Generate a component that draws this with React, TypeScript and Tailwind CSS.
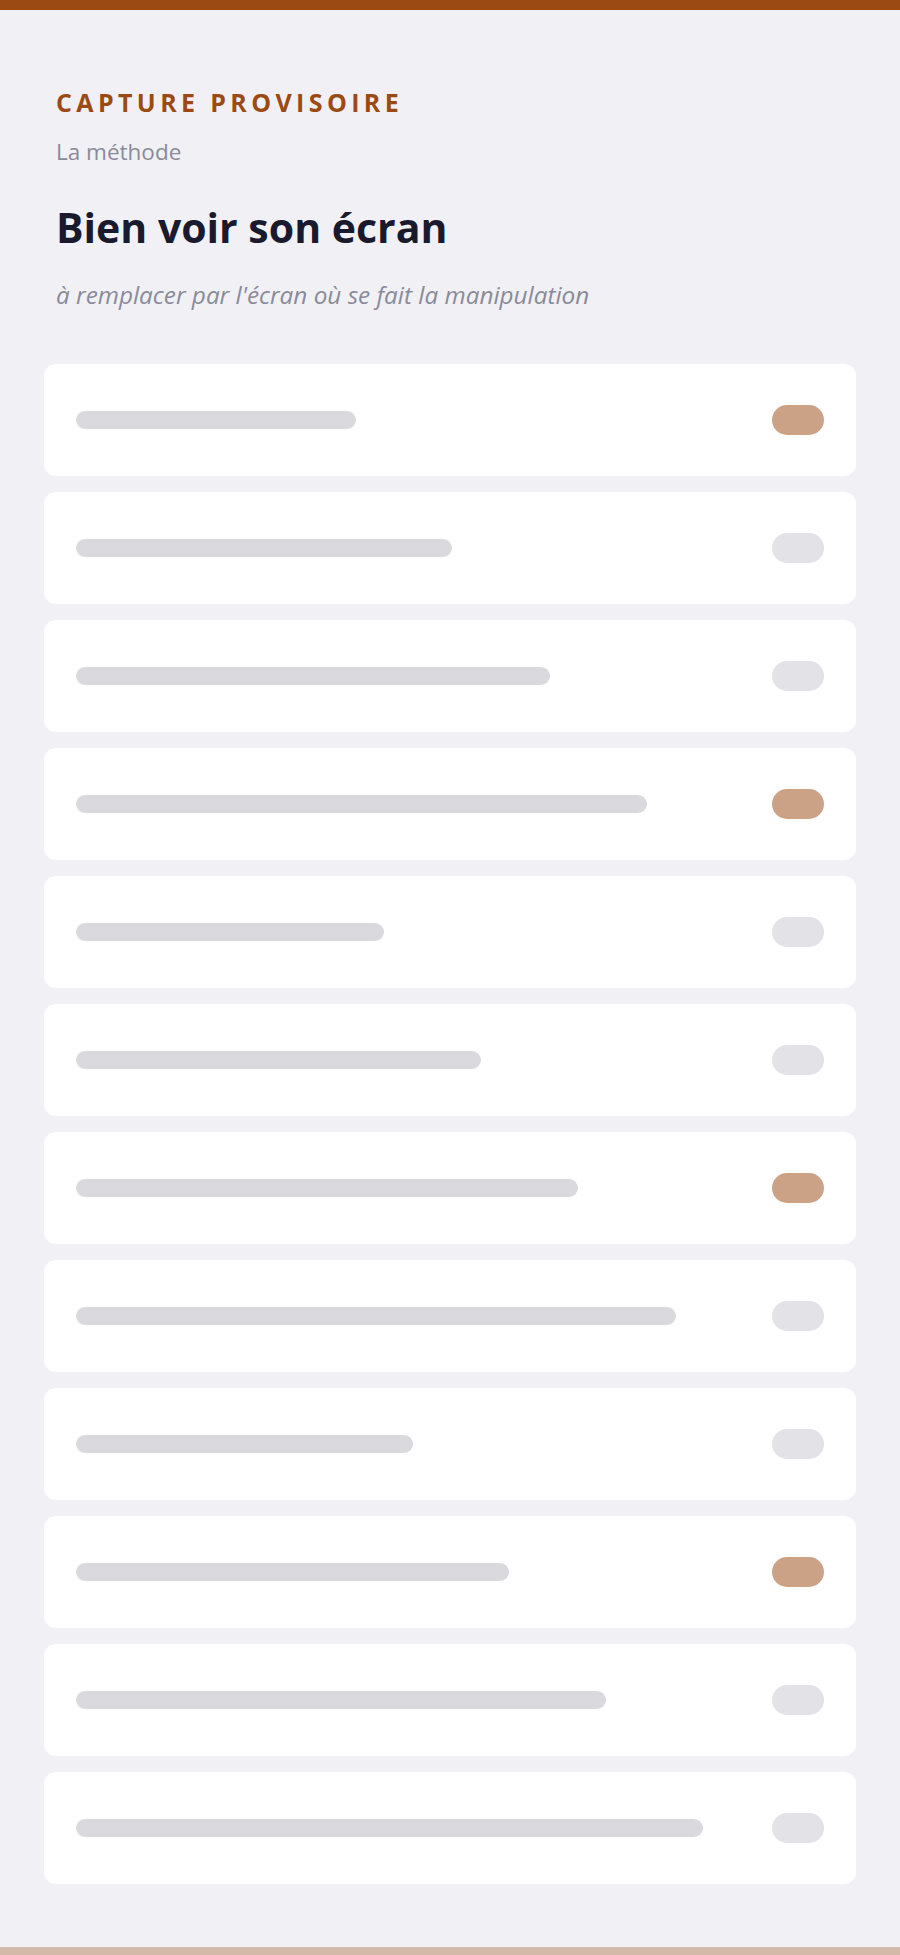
const rows = [
  { width: 280, active: true },
  { width: 376, active: false },
  { width: 474, active: false },
  { width: 571, active: true },
  { width: 308, active: false },
  { width: 405, active: false },
  { width: 502, active: true },
  { width: 600, active: false },
  { width: 337, active: false },
  { width: 433, active: true },
  { width: 530, active: false },
  { width: 627, active: false },
];

function PlaceholderRow({ width, active }: { width: number; active: boolean }) {
  return (
    <div className="flex h-[112px] items-center justify-between rounded-xl bg-white px-8">
      <div className="h-[18px] rounded-full bg-[#d9d9de]" style={{ width }} />
      <div
        className={
          active
            ? 'h-[30px] w-[52px] rounded-full bg-[#cba285]'
            : 'h-[30px] w-[52px] rounded-full bg-[#e2e2e7]'
        }
      />
    </div>
  );
}

export default function App() {
  return (
    <div className="flex min-h-screen flex-col bg-[#f1f1f5] font-['Open_Sans',sans-serif]">
      <div className="h-[10px] bg-[#9a4a12]" />

      {/* Header */}
      <header className="px-[56px] pt-[76px]">
        <p className="text-[25px] font-bold uppercase leading-[32px] tracking-[0.175em] text-[#9a4a12]">
          Capture provisoire
        </p>
        <p className="mt-[19px] text-[22.5px] leading-[30px] text-[#8a8a99]">La méthode</p>
        <h1 className="mt-[35px] text-[41px] font-bold leading-[50px] text-[#1a1a2e]">
          Bien voir son écran
        </h1>
        <p className="mt-[27px] text-[24.3px] italic leading-[32px] text-[#8a8a99]">
          à remplacer par l'écran où se fait la manipulation
        </p>
      </header>

      {/* Placeholder list */}
      <main className="flex flex-col gap-4 px-[44px] pt-[53px] pb-[63px]">
        {rows.map((row, i) => (
          <PlaceholderRow key={i} width={row.width} active={row.active} />
        ))}
      </main>

      <div className="mt-auto h-[8px] bg-[#d4b8a8]" />
    </div>
  );
}
